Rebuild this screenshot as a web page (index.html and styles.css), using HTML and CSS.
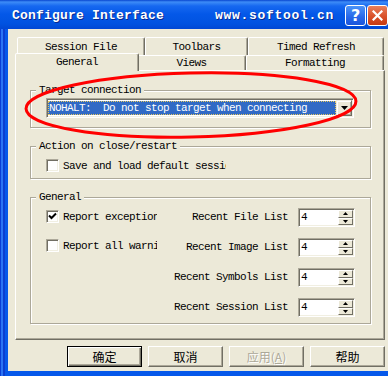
FILE: index.html
```html
<!DOCTYPE html>
<html>
<head>
    <meta charset="UTF-8">
    <title>Configure Interface</title>
    <link rel="stylesheet" href="styles.css">
</head>
<body>
<div class="win">
    <div class="titlebar">
        <span class="title">Configure Interface</span>
        <span class="title site">www.softool.cn</span>
        <span class="cap-btn help">?</span>
        <span class="cap-btn close">
            <svg width="11" height="11" viewBox="0 0 11 11"><path d="M1.5 1.5 L9.5 9.5 M9.5 1.5 L1.5 9.5" stroke="#fff" stroke-width="2.2" stroke-linecap="square"/></svg>
        </span>
    </div>
    <div class="frame">
        <div class="client">
            <div class="tabs">
                <div class="tabrow back">
                    <div class="tab t1">Session File</div>
                    <div class="tab t2">Toolbars</div>
                    <div class="tab t3">Timed Refresh</div>
                </div>
                <div class="tabrow front">
                    <div class="tab t1 sel">General</div>
                    <div class="tab t2">Views</div>
                    <div class="tab t3">Formatting</div>
                </div>
                <div class="page">
                    <fieldset class="group g-target">
                        <legend>Target connection</legend>
                        <div class="combo">
                            <div class="combo-text"><span class="combo-sel">NOHALT:  Do not stop target when connecting</span></div>
                            <span class="combo-btn">
                                <svg width="7" height="4" viewBox="0 0 7 4"><polygon points="0,0 7,0 3.5,4" fill="#000"/></svg>
                            </span>
                        </div>
                    </fieldset>
                    <fieldset class="group g-close">
                        <legend>Action on close/restart</legend>
                        <div class="check wide"><span class="chk"></span><span>Save and load default session</span></div>
                    </fieldset>
                    <fieldset class="group g-general">
                        <legend>General</legend>
                        <div class="cols">
                            <div class="checks">
                                <div class="check"><span class="chk on"><svg width="9" height="9" viewBox="0 0 9 9"><polyline points="1,3.5 3.5,6 8,1.5" fill="none" stroke="#000" stroke-width="2"/></svg></span><span>Report exceptions</span></div>
                                <div class="check"><span class="chk"></span><span>Report all warnings</span></div>
                            </div>
                            <div class="recent">
                                <label>Recent File List</label>
                                <div class="spin"><span class="spin-val">4</span><span class="spin-btns"><span><svg width="5" height="3" viewBox="0 0 5 3"><polygon points="0,3 5,3 2.5,0" fill="#000"/></svg></span><span><svg width="5" height="3" viewBox="0 0 5 3"><polygon points="0,0 5,0 2.5,3" fill="#000"/></svg></span></span></div>
                                <label>Recent Image List</label>
                                <div class="spin"><span class="spin-val">4</span><span class="spin-btns"><span><svg width="5" height="3" viewBox="0 0 5 3"><polygon points="0,3 5,3 2.5,0" fill="#000"/></svg></span><span><svg width="5" height="3" viewBox="0 0 5 3"><polygon points="0,0 5,0 2.5,3" fill="#000"/></svg></span></span></div>
                                <label>Recent Symbols List</label>
                                <div class="spin"><span class="spin-val">4</span><span class="spin-btns"><span><svg width="5" height="3" viewBox="0 0 5 3"><polygon points="0,3 5,3 2.5,0" fill="#000"/></svg></span><span><svg width="5" height="3" viewBox="0 0 5 3"><polygon points="0,0 5,0 2.5,3" fill="#000"/></svg></span></span></div>
                                <label>Recent Session List</label>
                                <div class="spin"><span class="spin-val">4</span><span class="spin-btns"><span><svg width="5" height="3" viewBox="0 0 5 3"><polygon points="0,3 5,3 2.5,0" fill="#000"/></svg></span><span><svg width="5" height="3" viewBox="0 0 5 3"><polygon points="0,0 5,0 2.5,3" fill="#000"/></svg></span></span></div>
                            </div>
                        </div>
                    </fieldset>
                </div>
            </div>
            <div class="btns">
                <span class="btn def">确定</span>
                <span class="btn">取消</span>
                <span class="btn dis">应用(<u>A</u>)</span>
                <span class="btn">帮助</span>
            </div>
        </div>
    </div>
    <!-- annotation drawn over the dialog -->
    <svg class="mark" width="388" height="376" viewBox="0 0 388 376">
        <ellipse cx="191" cy="105" rx="165" ry="32" transform="rotate(-1.3 191 105)" fill="none" stroke="#f00" stroke-width="3"/>
    </svg>
</div>
</body>
</html>
```

FILE: styles.css
```css
*{
    margin: 0;
    padding: 0;
    box-sizing: border-box;
}
html,body{
    width: 100%;
    height: 100%;
    overflow: hidden;
    background: #3a6ea5;
}
body{
    font: 11px/12px "Liberation Mono", monospace;
    letter-spacing: -0.6px;
    color: #000;
}
.win{
    width: 398px;
    height: 376px;
    position: relative;
    display: flex;
    flex-direction: column;
}
.titlebar{
    height: 29px;
    flex: none;
    display: flex;
    align-items: center;
    padding: 2px 0 0 12px;
    background: linear-gradient(to bottom, #0846d0 0, #3d8cf7 2px, #1668f0 6px, #0458e8 14px, #0052e0 24px, #0047d4 29px);
}
.title{
    font: bold 13px/16px "Liberation Mono", monospace;
    letter-spacing: 0.2px;
    color: #fff;
    text-shadow: 1px 1px 0 #0a2a8e;
}
.site{
    margin-left: 51px;
    letter-spacing: 0.7px;
}
.cap-btn{
    width: 21px;
    height: 21px;
    flex: none;
    border: 1px solid #fff;
    border-radius: 3px;
    display: flex;
    align-items: center;
    justify-content: center;
}
.help{
    margin-left: 11px;
    background: linear-gradient(to bottom, #4c94f8, #2766e8 60%, #1a55dc);
    color: #fff;
    font: bold 16px/19px "DejaVu Sans", sans-serif;
    letter-spacing: 0;
}
.close{
    margin-left: 1px;
    background: linear-gradient(to bottom, #e8805c, #d9512a 55%, #c63a12);
}
.frame{
    flex: 1;
    display: flex;
    padding: 0 0 5px 8px;
    background: linear-gradient(to right, #0a3fd6 0, #0a3fd6 1px, #2b74f4 1px, #2b74f4 3px, #0b3fd0 3px, #0b3fd0 5px, #0658ea 5px);
}
.client{
    flex: 1;
    background: #ece9d8;
    padding: 8px 0 0 7px;
}
.tabs{
    width: 370px;
}
.tabrow{
    display: flex;
    align-items: flex-start;
    margin-left: 2px;
}
.back{
    height: 18px;
}
.front{
    height: 15px;
}
.tab{
    height: 100%;
    display: flex;
    align-items: center;
    justify-content: center;
    background: #ece9d8;
    border: 1px solid;
    border-bottom: 0;
    border-color: #fff #716f64 transparent #fff;
    border-radius: 2px 2px 0 0;
    box-shadow: inset -1px 0 0 #aca899;
    white-space: pre;
}
.back .t1{ width: 128px; }
.back .t2{ width: 103px; }
.back .t3{ width: 136px; }
.front .t1{ width: 120px; }
.front .t2{ width: 109px; }
.front .t3{ width: 138px; }
.front .sel{
    width: 124px;
    height: 18px;
    margin: -2px -2px 0 -2px;
    z-index: 1;
    padding-bottom: 1px;
}
.page{
    height: 270px;
    border: 1px solid;
    border-color: #fff #716f64 #716f64 #fff;
    box-shadow: inset -1px -1px 0 #aca899;
    padding: 13px 0 0 14px;
}
.group{
    width: 341px;
    border: 1px solid #aca899;
    box-shadow: 1px 1px 0 #fff, inset 1px 1px 0 #fff;
    padding: 0 15px;
    margin-bottom: 12px;
}
.group legend{
    margin-left: -10px;
    padding: 0 3px;
    line-height: 12px;
    background: #ece9d8;
}
.g-target{ height: 44px; }
.g-close{ height: 39px; }
.g-general{ height: 133px; }

.combo{
    margin-top: 2px;
    width: 308px;
    height: 20px;
    display: flex;
    background: #fff;
    border: 1px solid;
    border-color: #aca899 #fff #fff #aca899;
    box-shadow: inset 1px 1px 0 #716f64, inset -1px -1px 0 #f1efe2;
    padding: 1px;
}
.combo-text{
    flex: 1;
    padding: 1px 0 1px 0;
    display: flex;
}
.combo-sel{
    flex: 1;
    background: #316ac5;
    color: #fff;
    white-space: pre;
    line-height: 12px;
    border: 1px dotted #e6c860;
}
.combo-btn{
    width: 16px;
    display: flex;
    align-items: center;
    justify-content: center;
    background: #ece9d8;
    border: 1px solid;
    border-color: #f1efe2 #716f64 #716f64 #f1efe2;
    box-shadow: inset 1px 1px 0 #fff, inset -1px -1px 0 #aca899;
}

.check{
    display: flex;
    align-items: center;
    gap: 4px;
    height: 13px;
    width: 111px;
    overflow: hidden;
    white-space: pre;
}
.check.wide{
    margin-top: 7px;
    width: 180px;
}
.chk{
    width: 13px;
    height: 13px;
    flex: none;
    display: flex;
    align-items: center;
    justify-content: center;
    background: #fff;
    border: 1px solid;
    border-color: #aca899 #fff #fff #aca899;
    box-shadow: inset 1px 1px 0 #716f64, inset -1px -1px 0 #f1efe2;
}

.cols{
    display: flex;
    justify-content: space-between;
    align-items: flex-start;
}
.checks{
    margin-top: 7px;
    display: flex;
    flex-direction: column;
    gap: 16px;
}
.recent{
    margin-top: 5px;
    display: grid;
    grid-template-columns: auto 57px;
    column-gap: 10px;
    row-gap: 11px;
}
.recent label{
    text-align: right;
    line-height: 19px;
    white-space: pre;
}
.spin{
    height: 19px;
    display: flex;
    background: #fff;
    border: 1px solid;
    border-color: #aca899 #fff #fff #aca899;
    box-shadow: inset 1px 1px 0 #716f64, inset -1px -1px 0 #f1efe2;
    padding: 1px;
}
.spin-val{
    flex: 1;
    padding-left: 1px;
    line-height: 15px;
}
.spin-btns{
    width: 15px;
    display: flex;
    flex-direction: column;
}
.spin-btns span{
    flex: 1;
    display: flex;
    align-items: center;
    justify-content: center;
    background: #ece9d8;
    border: 1px solid;
    border-color: #fff #716f64 #716f64 #fff;
}

.btns{
    width: 370px;
    margin-top: 6px;
    display: flex;
    justify-content: flex-end;
    gap: 6px;
}
.btn{
    width: 75px;
    height: 21px;
    display: flex;
    align-items: center;
    justify-content: center;
    font: 12px/14px "Noto Sans CJK SC", sans-serif;
    letter-spacing: 0;
    border: 1px solid;
    border-color: #fff #716f64 #716f64 #fff;
    box-shadow: inset -1px -1px 0 #aca899;
}
.btn.def{
    border-color: #000;
    box-shadow: inset 1px 1px 0 #fff, inset -1px -1px 0 #716f64, inset -2px -2px 0 #aca899;
}
.btn.dis{
    color: #aca899;
    text-shadow: 1px 1px 0 #fff;
}
.btn u{
    text-decoration-thickness: 1px;
}
.mark{
    position: absolute;
    left: 0;
    top: 0;
    pointer-events: none;
}
```
